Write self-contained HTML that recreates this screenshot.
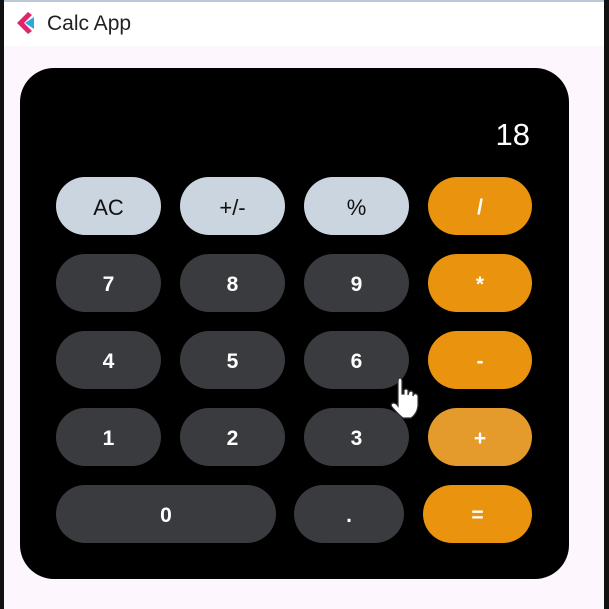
<!DOCTYPE html>
<html><head><style>
*{margin:0;padding:0;box-sizing:border-box}
body{width:609px;height:609px;background:#fdf7fd;position:relative;overflow:hidden;font-family:"Liberation Sans","DejaVu Sans",sans-serif}
.lb{position:absolute;left:0;top:0;width:4px;height:609px;background:#111}
.rb{position:absolute;right:0;top:0;width:5px;height:609px;background:#111}
.tb{position:absolute;left:0;top:0;width:609px;height:2px;background:#b8c8d8}
.hdr{position:absolute;left:4px;top:2px;width:600px;height:44px;background:#fff}
.title{position:absolute;left:47px;top:12px;font-size:21px;color:#222}
.panel{position:absolute;left:20px;top:68px;width:549px;height:511px;background:#000;border-radius:34px}
.disp{position:absolute;right:79px;top:117px;font-size:31px;color:#fff}
.b{position:absolute;height:58px;border-radius:29px;display:flex;align-items:center;justify-content:center;font-size:21px;font-weight:bold;color:#fff;padding-top:4px}
.l{background:#cbd5e0;color:#111;font-weight:normal;font-size:22px}
.d{background:#3a3b3f}
.o{background:#e9930f}
</style></head><body>
<div class="tb"></div>
<div class="hdr"></div>
<div class="lb"></div><div class="rb"></div>
<svg style="position:absolute;left:16px;top:11px" width="22" height="24" viewBox="0 0 22 24"><path d="M12 1 L1 12 L12 23 L16 20 L8 12 L16 4Z" fill="#e0246e"/><path d="M18 6 L9 12 L18 18Z" fill="#2ea8d8"/></svg>
<div class="title">Calc App</div>
<div class="panel"></div>
<div class="disp">18</div>
<div class="b l" style="left:56px;top:177px;width:105px">AC</div>
<div class="b l" style="left:180px;top:177px;width:105px">+/-</div>
<div class="b l" style="left:304px;top:177px;width:105px">%</div>
<div class="b o" style="left:428px;top:177px;width:104px">/</div>
<div class="b d" style="left:56px;top:254px;width:105px">7</div>
<div class="b d" style="left:180px;top:254px;width:105px">8</div>
<div class="b d" style="left:304px;top:254px;width:105px">9</div>
<div class="b o" style="left:428px;top:254px;width:104px">*</div>
<div class="b d" style="left:56px;top:331px;width:105px">4</div>
<div class="b d" style="left:180px;top:331px;width:105px">5</div>
<div class="b d" style="left:304px;top:331px;width:105px">6</div>
<div class="b o" style="left:428px;top:331px;width:104px">-</div>
<div class="b d" style="left:56px;top:408px;width:105px">1</div>
<div class="b d" style="left:180px;top:408px;width:105px">2</div>
<div class="b d" style="left:304px;top:408px;width:105px">3</div>
<div class="b o" style="left:428px;top:408px;width:104px;background:#e59a2c">+</div>
<div class="b d" style="left:56px;top:485px;width:220px">0</div>
<div class="b d" style="left:294px;top:485px;width:110px">.</div>
<div class="b o" style="left:423px;top:485px;width:109px">=</div>
<svg style="position:absolute;left:389px;top:378px" width="32" height="42" viewBox="0 0 32 42"><path d="M9 3 Q9 0 11 0 Q13 0 13 3 L13 16 L15 16 L15 12 Q17 10 19 12 L19 17 L20 14 Q22 12 24 14 L24 18 L25 16 Q28 15 29 18 L29 28 Q28 36 22 40 L14 40 Q9 36 3 29 Q1 26 4 25 Q7 25 9 28Z" fill="#fff" stroke="#333" stroke-width="1.2"/></svg>
</body></html>
